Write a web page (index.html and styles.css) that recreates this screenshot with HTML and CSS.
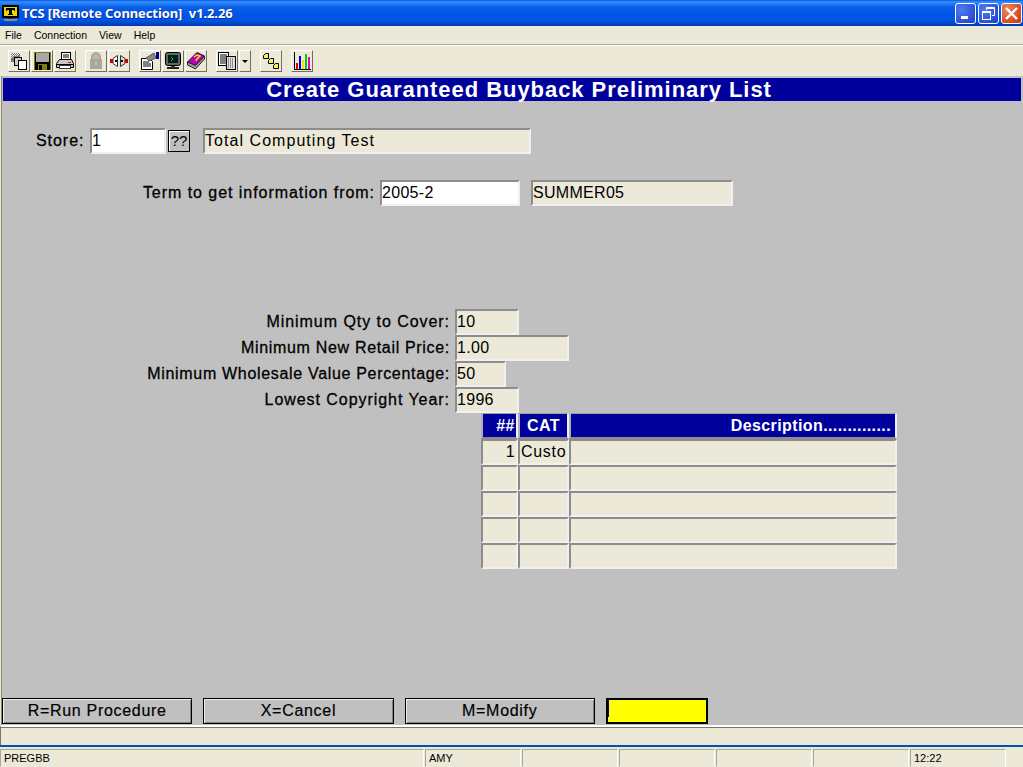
FILE: index.html
```html
<!doctype html>
<html>
<head>
    <meta charset="utf-8">
    <link rel="stylesheet" href="styles.css">
</head>
<body>

<div class="titlebar">
    <svg class="app-icon" width="17" height="17" viewBox="0 0 17 17">
        <rect x="0" y="0" width="17" height="13" fill="#000"/>
        <rect x="2" y="2" width="13" height="9" fill="#e8d800"/>
        <path d="M4 3h9v3h-1V5h-2v4h1v1H6V9h1V5H5v1H4z" fill="#000"/>
        <rect x="6" y="13" width="5" height="1" fill="#333"/>
        <rect x="2" y="14" width="13" height="2" fill="#8a8a8a"/>
    </svg>
    <span class="title-text">TCS [Remote Connection]&nbsp; v1.2.26</span>
    <div class="win-btns">
        <div class="win-btn">
            <svg width="19" height="19" viewBox="0 0 19 19"><rect x="5" y="12" width="7" height="3" fill="#fff"/></svg>
        </div>
        <div class="win-btn">
            <svg width="19" height="19" viewBox="0 0 19 19" fill="none" stroke="#fff">
                <path d="M7.500 6V3.500h8v8H13"/><path d="M7 4.500h8"/><rect x="3.500" y="7.500" width="8" height="8"/><path d="M4 8.500h7"/>
            </svg>
        </div>
        <div class="win-btn close">
            <svg width="19" height="19" viewBox="0 0 19 19"><path d="M4 4l11 11M15 4L4 15" stroke="#fff" stroke-width="2.400"/></svg>
        </div>
    </div>
</div>

<div class="menubar">
    <span>File</span>
    <span>Connection</span>
    <span>View</span>
    <span>Help</span>
</div>

<div class="toolbar">
    <div class="tool">
        <svg width="18" height="18" viewBox="0 0 18 18">
            <path d="M1 1h9v9H1z" fill="#777"/>
            <path d="M1 1h1v1H1zM3 1h1v1H3zM5 1h1v1H5zM7 1h1v1H7zM9 1h1v1H9zM2 2h1v1H2zM4 2h1v1H4zM6 2h1v1H6zM8 2h1v1H8zM1 3h1v1H1zM3 3h1v1H3zM2 4h1v1H2zM1 5h1v1H1zM5 3h1v1H5zM7 3h1v1H7z" fill="#eee"/>
            <rect x="4.500" y="5.500" width="7" height="8" fill="#ccc" stroke="#000"/>
            <rect x="8.500" y="8.500" width="8" height="9" fill="#fff" stroke="#000"/>
        </svg>
    </div>
    <div class="tool">
        <svg width="18" height="18" viewBox="0 0 18 18">
            <rect x="1" y="0" width="17" height="18" fill="#000"/>
            <rect x="3" y="1" width="13" height="9" fill="#a8a8a8"/>
            <path d="M1 0h1v18H1zM17 0h1v18h-1zM2 0h15v1H2z" fill="#808000"/>
            <rect x="5" y="12" width="9" height="6" fill="#808000"/>
            <rect x="6" y="13" width="3" height="5" fill="#000"/>
        </svg>
    </div>
    <div class="tool group-end">
        <svg width="18" height="18" viewBox="0 0 18 18">
            <rect x="5.500" y="0.500" width="9" height="8" fill="#fff" stroke="#000"/>
            <path d="M7 3h6M7 5h6" stroke="#000"/>
            <path d="M3.500 7.500h12l2 4v4H0.500v-4z" fill="#c8c8c8" stroke="#000"/>
            <path d="M1 12.500h16" stroke="#000"/>
            <rect x="12" y="10" width="3" height="1" fill="#e00000"/>
            <rect x="3.500" y="13.500" width="11" height="3" fill="#fff" stroke="#333"/>
        </svg>
    </div>
    <div class="tool">
        <svg width="18" height="18" viewBox="0 0 18 18">
            <path d="M5 8V5a4 4 0 0 1 8 0v3" fill="#bdbaac" stroke="#aaa79a" stroke-width="2"/>
            <rect x="3" y="7" width="12" height="10" fill="#aaa79a"/>
            <rect x="8" y="10" width="2" height="3" fill="#c4c1b4"/>
        </svg>
    </div>
    <div class="tool group-end">
        <svg width="18" height="18" viewBox="0 0 18 18">
            <path d="M7.500 3.500v11L3 11.500v-5z" fill="#fff" stroke="#333"/>
            <path d="M10.500 3.500v11l4.500-3v-5z" fill="#ddd" stroke="#333"/>
            <rect x="0" y="7" width="3" height="4" fill="#d00000"/>
            <rect x="15" y="7" width="3" height="4" fill="#d00000"/>
            <rect x="5" y="8" width="2" height="2" fill="#000"/>
            <rect x="11" y="8" width="2" height="2" fill="#000"/>
        </svg>
    </div>
    <div class="tool">
        <svg width="18" height="18" viewBox="0 0 18 18">
            <path d="M0.500 6.500h8l3 3v8H0.500z" fill="#fff" stroke="#000"/>
            <path d="M2 10h6M2 12h8M2 14h8" stroke="#000"/>
            <path d="M5 6l8-5 2 5-7 3z" fill="#888" stroke="#555"/>
            <rect x="15" y="0" width="3" height="7" fill="#00008b"/>
        </svg>
    </div>
    <div class="tool">
        <svg width="18" height="18" viewBox="0 0 18 18">
            <rect x="1.500" y="0.500" width="15" height="13" rx="2" fill="#666" stroke="#000"/>
            <rect x="4" y="3" width="10" height="8" fill="#002020"/>
            <path d="M7 5l2 2-2 2" fill="none" stroke="#00e000"/>
            <rect x="7" y="14" width="4" height="1" fill="#444"/>
            <rect x="3" y="15" width="12" height="2" fill="#222"/>
        </svg>
    </div>
    <div class="tool group-end">
        <svg width="18" height="18" viewBox="0 0 18 18">
            <path d="M0.500 10L10 0.500l7.500 3.500-9 9.500z" fill="#c000c0" stroke="#300030"/>
            <path d="M0.500 10v3l8 4 9-10V4l-9 9.500z" fill="#9a9a9a" stroke="#222"/>
            <path d="M7 5l3-2 3 1-3 3-1 2" fill="none" stroke="#f0e000" stroke-width="1.500"/>
        </svg>
    </div>
    <div class="tool joined">
        <svg width="18" height="18" viewBox="0 0 18 18">
            <rect x="0.500" y="0.500" width="10" height="13" fill="#fff" stroke="#000"/>
            <path d="M2 3h7M2 5h7M2 7h7M2 9h7M2 11h7" stroke="#000"/>
            <rect x="8.500" y="4.500" width="9" height="13" fill="#ddd" stroke="#000"/>
            <path d="M10 7h6M10 9h6M10 11h6M10 13h6M10 15h6" stroke="#444" stroke-dasharray="1 1"/>
        </svg>
    </div>
    <div class="tool arrow group-end"><div class="caret"></div></div>
    <div class="tool group-end">
        <svg width="18" height="18" viewBox="0 0 18 18">
            <path d="M4 4l5 5 5 5" stroke="#000" fill="none"/>
            <path d="M1.500 3.500l2-2h3v5h-5z" fill="#f4f060" stroke="#000"/>
            <path d="M6.500 8.500l2-2h3v5h-5z" fill="#f4f060" stroke="#000"/>
            <path d="M11.500 13.500l2-2h3v5h-5z" fill="#f4f060" stroke="#000"/>
        </svg>
    </div>
    <div class="tool">
        <svg width="18" height="18" viewBox="0 0 18 18">
            <path d="M1.500 0v17.500H18" fill="none" stroke="#000"/>
            <rect x="3" y="11" width="2" height="6" fill="#e00000"/>
            <rect x="6" y="4" width="2" height="13" fill="#0000e0"/>
            <rect x="9" y="8" width="2" height="9" fill="#e8e800"/>
            <rect x="12" y="2" width="2" height="15" fill="#00d000"/>
            <rect x="15" y="5" width="2" height="12" fill="#f000c0"/>
        </svg>
    </div>
</div>

<div class="form">
    <div class="form-title">Create Guaranteed Buyback Preliminary List</div>

    <div class="row store-row">
        <label class="lbl wide w-storelbl">Store:</label>
        <div class="field white w-store">1</div>
        <div class="lookup">??</div>
        <div class="field wide w-storename">Total Computing Test</div>
    </div>

    <div class="row term-row">
        <label class="lbl wide right w-termlbl">Term to get information from:</label>
        <div class="field white w-term">2005-2</div>
        <div class="field w-termname">SUMMER05</div>
    </div>

    <div class="mins">
        <div class="row">
            <label class="lbl wide right w-minlbl">Minimum Qty to Cover:</label>
            <div class="field w-64">10</div>
        </div>
        <div class="row">
            <label class="lbl right w-minlbl">Minimum New Retail Price:</label>
            <div class="field w-114">1.00</div>
        </div>
        <div class="row">
            <label class="lbl right w-minlbl">Minimum Wholesale Value Percentage:</label>
            <div class="field w-51">50</div>
        </div>
        <div class="row">
            <label class="lbl wide right w-minlbl">Lowest Copyright Year:</label>
            <div class="field w-64">1996</div>
        </div>
    </div>

    <div class="grid">
        <div class="head num">##</div>
        <div class="head cat">CAT</div>
        <div class="head desc">Description..............</div>

        <div class="field num">1</div>
        <div class="field cat-value">Custo</div>
        <div class="field"></div>

        <div class="field"></div><div class="field"></div><div class="field"></div>
        <div class="field"></div><div class="field"></div><div class="field"></div>
        <div class="field"></div><div class="field"></div><div class="field"></div>
        <div class="field"></div><div class="field"></div><div class="field"></div>
    </div>

    <div class="actions">
        <div class="action">R=Run Procedure</div>
        <div class="action">X=Cancel</div>
        <div class="action">M=Modify</div>
        <div class="action yellow"><div class="cursor"></div></div>
    </div>
</div>

<div class="message"></div>

<div class="statusbar">
    <div class="cell first">PREGBB</div>
    <div class="cell">AMY</div>
    <div class="cell"></div>
    <div class="cell"></div>
    <div class="cell"></div>
    <div class="cell"></div>
    <div class="cell">12:22</div>
</div>

</body>
</html>
```

FILE: styles.css
```css
html,
body {
    width: 100%;
    height: 100%;
    padding: 0;
    margin: 0;
    overflow: hidden;
}

body {
    display: flex;
    flex-direction: column;
    height: 767px;
    background: #ece9d8;
    font-family: "Liberation Sans", Arial, sans-serif;
    color: #000;
}

/* window chrome */
.titlebar {
    display: flex;
    align-items: center;
    flex: 0 0 26px;
    padding: 0 1px 0 2px;
    box-sizing: border-box;
    background: linear-gradient(to bottom, #0058e6 0, #3a93ff 2px, #2a82f5 3px, #0a5fe8 7px, #0054e3 14px, #0056e6 20px, #0048cc 23px, #003bb5 26px);
}

.app-icon {
    margin-right: 3px;
}

.title-text {
    font-family: "Noto Sans", sans-serif;
    font-weight: bold;
    font-size: 13px;
    letter-spacing: -0.100px;
    color: #fff;
    text-shadow: 1px 1px 0 #0f2f90;
    white-space: pre;
}

.win-btns {
    display: flex;
    gap: 2px;
    margin-left: auto;
}

.win-btn {
    display: flex;
    width: 21px;
    height: 21px;
    box-sizing: border-box;
    border: 1px solid #fff;
    border-radius: 3px;
    background: radial-gradient(circle at 30% 30%, #4f7df0, #2a50d8 70%, #2040c0);
}

.win-btn.close {
    background: radial-gradient(circle at 30% 30%, #e88a60, #d8481c 70%, #c03810);
}

.menubar {
    display: flex;
    flex: 0 0 19px;
    align-items: center;
    gap: 12px;
    padding-left: 5px;
    box-sizing: border-box;
    font-size: 10.500px;
    border-bottom: 1px solid #aca899;
    box-shadow: 0 1px 0 #fff;
}

.toolbar {
    display: flex;
    flex: 0 0 31px;
    padding: 5px 0 0 8px;
    box-sizing: border-box;
    gap: 1px;
}

.tool {
    display: flex;
    align-items: center;
    justify-content: center;
    width: 22px;
    height: 22px;
    box-sizing: border-box;
    border: 1px solid;
    border-color: #fff #716f64 #716f64 #fff;
}

.tool.group-end {
    margin-right: 8px;
}

.tool.arrow {
    width: 12px;
}

.caret {
    width: 0;
    height: 0;
    border-left: 3px solid transparent;
    border-right: 3px solid transparent;
    border-top: 3px solid #000;
}

/* the form */
.form {
    display: flex;
    flex-direction: column;
    flex: 0 0 649px;
    position: relative;
    box-sizing: border-box;
    margin-left: 1px;
    background: #c0c0c0;
    padding: 2px 0 0 1px;
    border-left: 1px solid #8a8778;
}

.form-title {
    margin-right: 2px;
    padding-left: 14px;
    height: 23px;
    background: #00009c;
    color: #fff;
    font-weight: bold;
    font-size: 22px;
    line-height: 23px;
    text-align: center;
    letter-spacing: 0.950px;
}

.row {
    display: flex;
    height: 26px;
    font-size: 16px;
    line-height: 22px;
}

.store-row {
    margin-top: 27px;
    padding-left: 33px;
}

.term-row {
    margin-top: 26px;
}

.mins {
    margin-top: 103px;
}

.lbl {
    line-height: 26px;
    font-size: 16px;
    letter-spacing: 0.680px;
    -webkit-text-stroke: 0.300px #000;
    white-space: nowrap;
}

.lbl.wide { letter-spacing: 0.950px; }
.lbl.right { text-align: right; }

.w-storelbl { width: 54px; }
.w-termlbl { width: 372px; margin-right: 5px; }
.w-minlbl { width: 447px; margin-right: 5px; }

.field {
    box-sizing: border-box;
    height: 26px;
    background: #ece9d8;
    border: 2px solid;
    border-color: #8c8c8c #f0f0f0 #f0f0f0 #8c8c8c;
    font-size: 16px;
    line-height: 22px;
    letter-spacing: 0.300px;
    overflow: hidden;
    white-space: nowrap;
}

.field.white { background: #fff; }
.field.wide { letter-spacing: 1.050px; }
.field.cat-value { letter-spacing: 0.700px; padding-left: 1px; }

.w-store { width: 76px; }
.w-storename { width: 328px; margin-left: 13px; }
.w-term { width: 140px; }
.w-termname { width: 202px; margin-left: 11px; }
.w-64 { width: 64px; }
.w-114 { width: 114px; }
.w-51 { width: 51px; }

.lookup {
    box-sizing: border-box;
    width: 22px;
    height: 22px;
    margin: 2px 0 0 2px;
    background: #c0c0c0;
    border: 1px solid #000;
    box-shadow: inset 1px 1px 0 #fff;
    font-size: 15px;
    line-height: 20px;
    text-align: center;
}

.grid {
    display: grid;
    grid-template-columns: 37px 51px 328px;
    grid-auto-rows: 26px;
    width: 416px;
    margin-left: 478px;
}

.head {
    box-sizing: border-box;
    background: #00009c;
    color: #fff;
    font-size: 16px;
    font-weight: bold;
    line-height: 23px;
    letter-spacing: 0.500px;
    border: 2px solid;
    border-top-width: 1px;
    border-color: #a0a0a0 #f0f0f0 #8c8c8c #b0b0b0;
    padding: 0 2px;
    text-align: center;
}

.head.desc {
    text-align: right;
    padding-right: 4px;
    letter-spacing: 0.400px;
}

.num { text-align: right; padding-right: 1px; }

.actions {
    display: flex;
    gap: 11px;
    position: absolute;
    left: 0;
    right: 0;
    bottom: 1px;
}

.action {
    box-sizing: border-box;
    width: 190.300px;
    height: 26px;
    background: #c0c0c0;
    border: 1px solid #000;
    box-shadow: inset 1px 1px 0 #eee, inset -1px -1px 0 #808080;
    font-size: 16px;
    letter-spacing: 0.700px;
    line-height: 24px;
    text-align: center;
    -webkit-text-stroke: 0.200px #000;
}

.action.yellow {
    width: 102px;
    background: #ff0;
    border: 2px solid #000;
    box-shadow: none;
}

.cursor {
    width: 1px;
    height: 17px;
    background: #00009c;
}

/* bottom strips */
.message {
    flex: 0 0 20px;
    box-sizing: border-box;
    border-top: 2px solid #fff;
    box-shadow: inset 0 1px 0 #7c7868;
    border-left: 1px solid #7c7868;
}

.statusbar {
    display: flex;
    flex: 1;
    gap: 1px;
    box-sizing: border-box;
    padding-top: 2px;
    border-top: 2px solid #0054a6;
    border-bottom: 1px solid #316ac5;
}

.cell {
    box-sizing: border-box;
    width: 96px;
    border: 1px solid;
    border-color: #aca899 #fff transparent #aca899;
    font-size: 11px;
    line-height: 16px;
    padding-left: 3px;
}

.cell.first {
    width: 424px;
}
```
